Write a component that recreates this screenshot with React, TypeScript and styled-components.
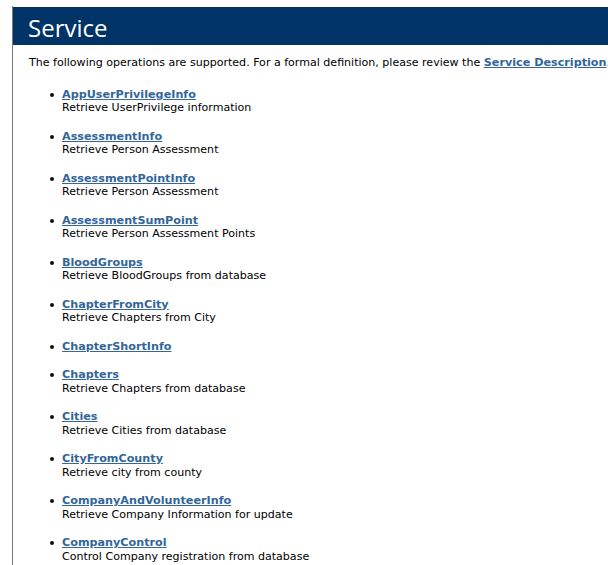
import { createGlobalStyle, styled } from "styled-components";

const GlobalStyle = createGlobalStyle`
  html, body {
    margin: 0;
    padding: 0;
    background: #ffffff;
    overflow: hidden;
  }
  body {
    color: #000000;
    font-family: "DejaVu Sans", Verdana, sans-serif;
  }
`;

const Frame = styled.div`
  margin: 6px 0 0 12px;
  padding-top: 1px;
  min-height: 560px;
  width: 596px;
  overflow: hidden;
  border-left: 1px solid #7a7a7a;
`;

const Heading = styled.h1`
  margin: 0;
  height: 38px;
  box-sizing: border-box;
  padding: 8px 0 0 15px;
  background-color: #003366;
  color: #ffffff;
  font-family: "Open Sans", "Noto Sans", sans-serif;
  font-size: 24px;
  font-weight: normal;
  line-height: 26px;
`;

const Content = styled.div`
  margin-left: 16px;
  font-size: 11.05px;
  line-height: 13.5px;
`;

const Intro = styled.p`
  margin: 11px 0 0;
  white-space: nowrap;
`;

const Link = styled.a`
  color: #336699;
  font-size: 11.2px;
  font-weight: bold;
  text-decoration: underline;
`;

const OperationList = styled.ul`
  margin: 0;
  padding: 3px 0 0 33px;
  list-style: none;
`;

const Operation = styled.li`
  position: relative;
  margin-top: 15px;
  line-height: 13.5px;

  /* round bullet, a touch heavier than the default disc */
  &::before {
    content: "";
    position: absolute;
    left: -12px;
    top: 5px;
    width: 4px;
    height: 4px;
    border-radius: 50%;
    background: #111;
  }
`;

const Description = styled.div`
  white-space: nowrap;
`;

type Op = { name: string; text?: string };

const operations: Op[] = [
  { name: "AppUserPrivilegeInfo", text: "Retrieve UserPrivilege information" },
  { name: "AssessmentInfo", text: "Retrieve Person Assessment" },
  { name: "AssessmentPointInfo", text: "Retrieve Person Assessment" },
  { name: "AssessmentSumPoint", text: "Retrieve Person Assessment Points" },
  { name: "BloodGroups", text: "Retrieve BloodGroups from database" },
  { name: "ChapterFromCity", text: "Retrieve Chapters from City" },
  { name: "ChapterShortInfo" },
  { name: "Chapters", text: "Retrieve Chapters from database" },
  { name: "Cities", text: "Retrieve Cities from database" },
  { name: "CityFromCounty", text: "Retrieve city from county" },
  { name: "CompanyAndVolunteerInfo", text: "Retrieve Company Information for update" },
  { name: "CompanyControl", text: "Control Company registration from database" },
];

export default function App() {
  return (
    <>
      <GlobalStyle />
      <Frame>
        <Heading>Service</Heading>
        <Content>
          <Intro>
            The following operations are supported. For a formal definition, please review the{" "}
            <Link href="#wsdl">Service Description</Link>.
          </Intro>
          <OperationList>
            {operations.map(op => (
              <Operation key={op.name}>
                <Link href={`#op=${op.name}`}>{op.name}</Link>
                {op.text && <Description>{op.text}</Description>}
              </Operation>
            ))}
          </OperationList>
        </Content>
      </Frame>
    </>
  );
}
